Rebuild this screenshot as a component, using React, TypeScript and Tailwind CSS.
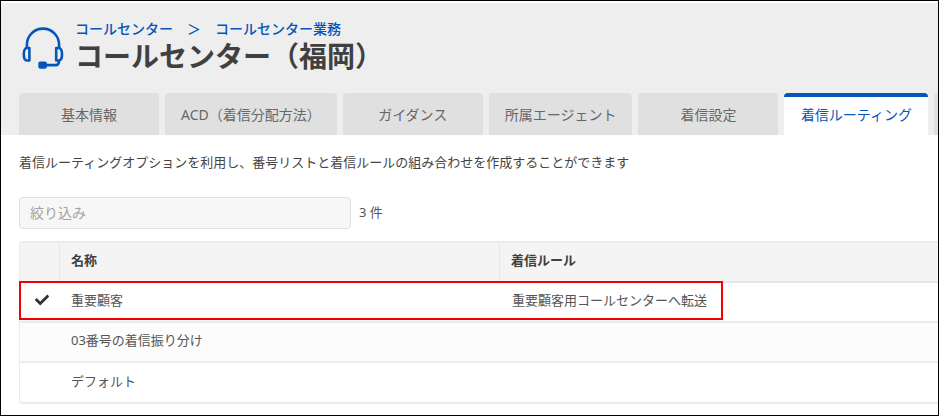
import { FaCheck } from "react-icons/fa";

const tabs = [
  { label: "基本情報" },
  { label: "ACD（着信分配方法）" },
  { label: "ガイダンス" },
  { label: "所属エージェント" },
  { label: "着信設定" },
  { label: "着信ルーティング", active: true },
  { label: "" },
];

const rows = [
  { name: "重要顧客", rule: "重要顧客用コールセンターへ転送", checked: true },
  { name: "03番号の着信振り分け", rule: "", checked: false },
  { name: "デフォルト", rule: "", checked: false },
];

function HeadsetIcon() {
  return (
    <svg
      className="h-[42px] w-[42px] shrink-0 text-[#0556bb]"
      viewBox="0 0 42 42"
      fill="none"
      stroke="currentColor"
      strokeWidth="2.6"
      strokeLinejoin="round"
      aria-hidden="true"
    >
      <path d="M4.900 20.500V17.700a16.100 16.100 0 0 1 32.200 0V20.500" />
      <path d="M7.400 21H5C2.900 21 1.800 23.500 1.800 27.200s1.100 6.300 3.200 6.300H7.400Z" />
      <path d="M34.200 21H36.600c2.100 0 3.400 2.500 3.400 6.200s-1.300 6.300-3.400 6.300H34.200Z" />
      <path d="M36.900 33.500v1.600a3 3 0 0 1-3 3H24" />
      <rect x="16.300" y="34.400" width="8.600" height="7.300" rx="2" fill="currentColor" stroke="none" />
    </svg>
  );
}

function Header() {
  return (
    <header className="mt-0.5 bg-[#eeeeee] pt-4">
      <div className="flex gap-[11px] pl-[21px]">
        <div className="pt-2">
          <HeadsetIcon />
        </div>
        <div>
          <nav aria-label="パンくずリスト" className="flex gap-3.5 text-sm font-medium leading-5 text-[#0556bb]">
            <a href="#center">コールセンター</a>
            <span>＞</span>
            <a href="#work">コールセンター業務</a>
          </nav>
          <h1 className="text-[28px] font-bold leading-[34px] text-[#404040]">コールセンター（福岡）</h1>
        </div>
      </div>
      <div role="tablist" className="mt-5 flex gap-1.5 overflow-hidden pl-[18px]">
        {tabs.map((tab) => (
          <button
            key={tab.label}
            type="button"
            role="tab"
            aria-selected={!!tab.active}
            className={
              tab.active
                ? "h-[42px] min-w-[144px] shrink-0 whitespace-nowrap rounded-t border-t-4 border-[#0556bb] bg-white px-4 pb-0.5 text-sm text-[#0556bb]"
                : "h-[42px] min-w-[140px] shrink-0 whitespace-nowrap rounded-t bg-[#e0e0e0] px-4 pt-0.5 text-sm text-[#666666]"
            }
          >
            {tab.label}
          </button>
        ))}
      </div>
    </header>
  );
}

function RoutingTable() {
  return (
    <div className="relative mt-3">
      <div className="overflow-hidden rounded-l border-y-2 border-l border-[#ebebeb]">
        <table className="w-full table-fixed border-separate border-spacing-0 text-left text-[13px] leading-5 text-[#555555]">
          <colgroup>
            <col className="w-10" />
            <col className="w-[440px]" />
            <col />
          </colgroup>
          <thead>
            <tr className="h-10 bg-[#f4f4f4] text-[#404040]">
              <th className="border-b-2 border-r border-[#e6e6e6]" aria-label="選択" />
              <th className="border-b-2 border-r border-[#e6e6e6] px-[11px] pb-1 font-bold">名称</th>
              <th className="border-b-2 border-[#e6e6e6] px-[11px] pb-1 font-bold">着信ルール</th>
            </tr>
          </thead>
          <tbody className="[&>tr:not(:last-child)>td]:border-b-2 [&>tr:nth-child(even)]:bg-[#fcfcfc]">
            {rows.map((row) => (
              <tr key={row.name} className="h-10 last:h-[39px]">
                <td className="border-[#ebebeb] pb-1 pl-[15px]">
                  {row.checked && <FaCheck className="h-3.5 w-3.5 text-[#333333]" />}
                </td>
                <td className="border-[#ebebeb] px-[11px] pb-1">{row.name}</td>
                <td className="border-[#ebebeb] px-3 pb-1">{row.rule}</td>
              </tr>
            ))}
          </tbody>
        </table>
      </div>
      <div className="pointer-events-none absolute left-0 top-10 h-[39px] w-[704px] border-2 border-[#f50000]" />
    </div>
  );
}

export default function App() {
  return (
    <div className="min-h-screen overflow-hidden border border-black bg-white font-['Noto_Sans','Noto_Sans_CJK_JP',sans-serif]">
      <Header />
      <main className="pb-2.5 pl-[18px] pt-[17px]">
        <p className="text-[13px] leading-5 text-[#444444]">
          着信ルーティングオプションを利用し、番号リストと着信ルールの組み合わせを作成することができます
        </p>
        <div className="mt-[25px] flex items-center gap-2 text-[13px] text-[#555555]">
          <input
            type="text"
            aria-label="絞り込み"
            placeholder="絞り込み"
            className="h-8 w-[332px] rounded border border-[#e0e0e0] bg-[#f7f7f7] px-2.5 pb-0.5 text-sm placeholder:text-[#a3a3a3]"
          />
          <span>3 件</span>
        </div>
        <RoutingTable />
      </main>
    </div>
  );
}
